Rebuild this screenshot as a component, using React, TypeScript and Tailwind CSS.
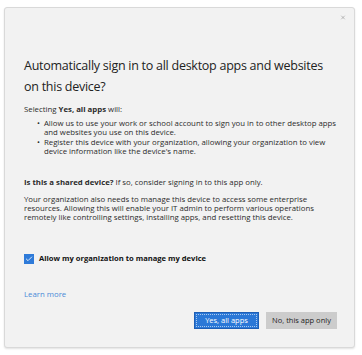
import { Check, X } from "lucide-react"

const font = { fontFamily: '"Open Sans", "Noto Sans", Arial, sans-serif' }

export default function App() {
    return (
        <div className="w-[362px] h-[355px] bg-white pt-[7px] pl-[4px]" style={font}>
            <div className="relative w-[351px] h-[341px] rounded-[3px] border border-[#d9d9d9] bg-[#f2f2f2] shadow-[0_1px_2px_rgba(0,0,0,0.12)] text-[#2b2b2b]">
                {/* fechar */}
                <button className="absolute right-[8px] top-[6px] w-[6px] h-[6px] flex items-center justify-center text-[#808080]">
                    <X size={7} strokeWidth={2} />
                </button>

                <div className="pl-[19px] pr-[17px] pt-[47px]">
                    <h1 className="text-[12.5px] leading-[21px] font-normal tracking-[-0.26px] text-[#222] whitespace-nowrap">
                        Automatically sign in to all desktop apps and websites<br />on this device?
                    </h1>

                    <p className="mt-[7px] text-[7.8px] leading-[10px]">
                        Selecting <b className="font-bold">Yes, all apps</b> will:
                    </p>

                    <ul className="mt-[5px] pl-[13px] text-[7.8px] leading-[9.4px]">
                        <li className="flex gap-[4px]">
                            <span>•</span>
                            <span>Allow us to use your work or school account to sign you in to other desktop apps and websites you use on this device.</span>
                        </li>
                        <li className="flex gap-[4px]">
                            <span>•</span>
                            <span>Register this device with your organization, allowing your organization to view device information like the device's name.</span>
                        </li>
                    </ul>

                    <p className="mt-[20px] text-[7.8px] leading-[10px]">
                        <b className="font-bold">Is this a shared device?</b> If so, consider signing in to this app only.
                    </p>

                    <p className="mt-[8px] text-[7.8px] leading-[9.4px]">
                        Your organization also needs to manage this device to access some enterprise resources. Allowing this will enable your IT admin to perform various operations remotely like controlling settings, installing apps, and resetting this device.
                    </p>

                    <label className="mt-[31px] flex items-center gap-[5px] h-[10px]">
                        <span className="w-[10px] h-[10px] bg-[#2f7bd9] flex items-center justify-center text-white">
                            <Check size={8} strokeWidth={2.5} />
                        </span>
                        <span className="text-[7.6px] font-bold text-[#111]">Allow my organization to manage my device</span>
                    </label>

                    <a className="block mt-[25px] text-[7.8px] leading-[10px] text-[#4a8ad8]">Learn more</a>

                    <div className="mt-[13px] flex justify-end gap-[7px]">
                        <button className="w-[65px] h-[17px] bg-[#2b78d7] border border-[#1f5fb5] text-white text-[7.5px] flex items-center justify-center">
                            <span className="border border-dotted border-white/60 w-[61px] h-[13px] flex items-center justify-center">Yes, all apps</span>
                        </button>
                        <button className="w-[71px] h-[17px] bg-[#cccccc] text-[#1e1e1e] text-[7.5px]">No, this app only</button>
                    </div>
                </div>
            </div>
        </div>
    )
}
